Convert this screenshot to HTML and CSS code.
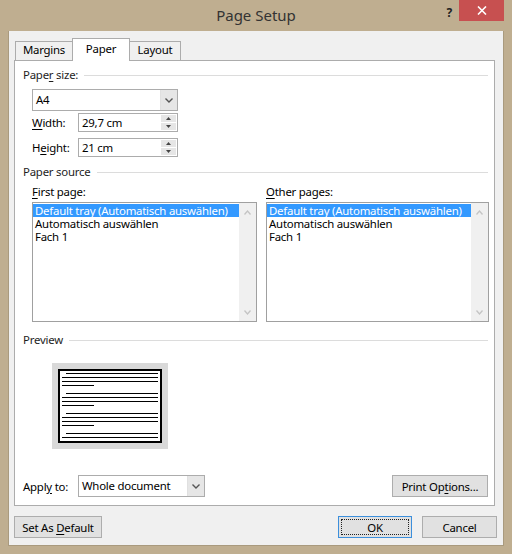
FILE: index.html
```html
<!DOCTYPE html>
<html>
<head>
<meta charset="utf-8">
<title>Page Setup</title>
<link rel="stylesheet" href="styles.css">
</head>
<body>
<div class="window">
  <div class="titlebar">
    <div></div>
    <div class="title">Page Setup</div>
    <div class="controls">
      <span class="help">?</span>
      <span class="close">
        <svg width="10" height="9" viewBox="0 0 10 9"><path d="M1 0.5 L9 8.5 M9 0.5 L1 8.5" stroke="#fff" stroke-width="1.6" fill="none"/></svg>
      </span>
    </div>
  </div>

  <div class="client">
    <div class="tabs">
      <div class="tab tab-margins">Margins</div>
      <div class="tab tab-paper active">Paper</div>
      <div class="tab tab-layout">Layout</div>
    </div>

    <div class="panel">
      <div class="group-head"><span>Pape<u>r</u> size:</span></div>
      <div class="indent size-block">
        <div class="combo size-combo">
          <span class="combo-text">A4</span>
          <span class="drop"><svg width="8" height="5" viewBox="0 0 8 5"><path d="M0.5 0.5 L4 4 L7.5 0.5" stroke="#555" stroke-width="1.4" fill="none"/></svg></span>
        </div>
        <div class="field-row">
          <span class="field-label"><u>W</u>idth:</span>
          <div class="spin">
            <span class="spin-text">29,7 cm</span>
            <span class="spin-btns">
              <i><svg width="5" height="3" viewBox="0 0 5 3"><path d="M0 3 L2.5 0 L5 3 Z" fill="#444"/></svg></i>
              <i><svg width="5" height="3" viewBox="0 0 5 3"><path d="M0 0 L2.5 3 L5 0 Z" fill="#444"/></svg></i>
            </span>
          </div>
        </div>
        <div class="field-row">
          <span class="field-label">H<u>e</u>ight:</span>
          <div class="spin">
            <span class="spin-text">21 cm</span>
            <span class="spin-btns">
              <i><svg width="5" height="3" viewBox="0 0 5 3"><path d="M0 3 L2.5 0 L5 3 Z" fill="#444"/></svg></i>
              <i><svg width="5" height="3" viewBox="0 0 5 3"><path d="M0 0 L2.5 3 L5 0 Z" fill="#444"/></svg></i>
            </span>
          </div>
        </div>
      </div>

      <div class="group-head source-head"><span>Paper source</span></div>
      <div class="indent lists">
        <div class="list-col">
          <div class="list-label"><u>F</u>irst page:</div>
          <div class="listbox">
            <div class="items">
              <div class="item selected">Default tray (Automatisch auswählen)</div>
              <div class="item">Automatisch auswählen</div>
              <div class="item">Fach 1</div>
            </div>
            <div class="vscroll">
              <svg width="7" height="5" viewBox="0 0 7 5"><path d="M0.5 4.5 L3.5 1 L6.5 4.5" stroke="#c4c4c4" stroke-width="1.3" fill="none"/></svg>
              <svg width="7" height="5" viewBox="0 0 7 5"><path d="M0.5 0.5 L3.5 4 L6.5 0.5" stroke="#c4c4c4" stroke-width="1.3" fill="none"/></svg>
            </div>
          </div>
        </div>
        <div class="list-col">
          <div class="list-label"><u>O</u>ther pages:</div>
          <div class="listbox">
            <div class="items">
              <div class="item selected">Default tray (Automatisch auswählen)</div>
              <div class="item">Automatisch auswählen</div>
              <div class="item">Fach 1</div>
            </div>
            <div class="vscroll">
              <svg width="7" height="5" viewBox="0 0 7 5"><path d="M0.5 4.5 L3.5 1 L6.5 4.5" stroke="#c4c4c4" stroke-width="1.3" fill="none"/></svg>
              <svg width="7" height="5" viewBox="0 0 7 5"><path d="M0.5 0.5 L3.5 4 L6.5 0.5" stroke="#c4c4c4" stroke-width="1.3" fill="none"/></svg>
            </div>
          </div>
        </div>
      </div>

      <div class="group-head preview-head"><span>Preview</span></div>
      <div class="preview">
        <svg width="116" height="86" viewBox="0 0 116 86">
          <rect x="0" y="0" width="116" height="86" fill="#d9d9d9"/>
          <rect x="7" y="7" width="102" height="72" fill="#fff" stroke="#000" stroke-width="2"/>
          <g stroke="#000" stroke-width="1">
            <path d="M14 10.5 H106 M10 14.5 H106 M10 18.5 H106 M10 22.5 H42"/>
            <path d="M14 30.5 H106 M10 34.5 H106 M10 38.5 H106 M10 42.5 H42"/>
            <path d="M14 50.5 H106 M10 54.5 H106 M10 58.5 H106 M10 62.5 H42"/>
            <path d="M14 70.5 H106 M10 74.5 H106"/>
          </g>
        </svg>
      </div>

      <div class="apply-row">
        <span class="apply-label">Appl<u>y</u> to:</span>
        <div class="combo apply-combo">
          <span class="combo-text">Whole document</span>
          <span class="drop"><svg width="8" height="5" viewBox="0 0 8 5"><path d="M0.5 0.5 L4 4 L7.5 0.5" stroke="#555" stroke-width="1.4" fill="none"/></svg></span>
        </div>
        <button class="btn print-btn">Print Op<u>t</u>ions...</button>
      </div>
    </div>

    <div class="buttons">
      <button class="btn default-btn">Set As <u>D</u>efault</button>
      <button class="btn ok-btn"><span class="focus">OK</span></button>
      <button class="btn cancel-btn">Cancel</button>
    </div>
  </div>
</div>
</body>
</html>
```

FILE: styles.css
```css
* {
  box-sizing: border-box;
}

body {
  margin: 0;
  width: 512px;
  height: 554px;
  overflow: hidden;
  background: #bfae90;
  font-family: "Segoe UI", "Noto Sans", sans-serif;
  font-size: 11.4px;
  letter-spacing: -0.22px;
  color: #000;
}

u {
  text-decoration: underline;
  text-underline-offset: 2px;
}

.window {
  display: flex;
  flex-direction: column;
  height: 554px;
}

/* ---- title bar ---- */
.titlebar {
  height: 31px;
  display: grid;
  grid-template-columns: 1fr auto 1fr;
  align-items: start;
}

.title {
  font-size: 15px;
  line-height: 30px;
  letter-spacing: 0;
  color: #333;
}

.controls {
  justify-self: end;
  display: flex;
  align-items: flex-start;
  margin-right: 8px;
}

.help {
  font-weight: bold;
  font-size: 12px;
  color: #222;
  margin-top: 4px;
  margin-right: 7px;
}

.close {
  width: 45px;
  height: 21px;
  background: #c75050;
  display: flex;
  align-items: center;
  justify-content: center;
}

/* ---- client area ---- */
.client {
  flex: 1;
  margin: 0 8px 8px;
  background: #f0f0f0;
  border: 1px solid #a99a7e;
  border-top: none;
  display: flex;
  flex-direction: column;
}

.tabs {
  display: flex;
  align-items: flex-end;
  height: 22px;
  margin: 7px 0 0 6px;
  position: relative;
  z-index: 1;
}

.tab {
  height: 19px;
  border: 1px solid #acacac;
  border-bottom: none;
  background: #f0f0f0;
  text-align: center;
  line-height: 16px;
  color: #000;
}

.tab-margins {
  width: 58px;
}

.tab-paper {
  width: 58px;
  margin-left: -1px;
}

.tab-layout {
  width: 52px;
  margin-left: -1px;
}

.tab.active {
  height: 23px;
  margin-bottom: -1px;
  background: #fff;
  position: relative;
  z-index: 2;
  line-height: 19px;
}

.panel {
  margin: 0 8px 0 5px;
  border: 1px solid #acacac;
  background: #fff;
  padding: 6px 6px 8px 8px;
  display: flex;
  flex-direction: column;
}

/* group headings with a rule running to the right */
.group-head {
  display: flex;
  align-items: center;
  gap: 6px;
  line-height: 16px;
  height: 16px;
  color: #1e1e1e;
}

.group-head::after {
  content: "";
  flex: 1;
  height: 1px;
  background: #dcdcdc;
}

.indent {
  margin-left: 9px;
}

.size-block {
  display: flex;
  flex-direction: column;
  margin-top: 6px;
}

/* ---- combo boxes ---- */
.combo {
  display: flex;
  height: 22px;
  border: 1px solid #acacac;
  background: #fff;
}

.combo-text {
  flex: 1;
  padding-left: 3px;
  line-height: 20px;
}

.drop {
  width: 17px;
  background: #e6e6e6;
  border-left: 1px solid #e0e0e0;
  display: flex;
  align-items: center;
  justify-content: center;
}

.size-combo {
  width: 146px;
}

/* ---- spinners ---- */
.field-row {
  display: flex;
  align-items: center;
  margin-top: 2px;
  height: 19px;
}

.field-row + .field-row {
  margin-top: 6px;
}

.field-label {
  width: 46px;
}

.spin {
  width: 100px;
  height: 19px;
  display: flex;
  border: 1px solid #acacac;
  background: #fff;
}

.spin-text {
  flex: 1;
  padding-left: 3px;
  line-height: 17px;
}

.spin-btns {
  width: 16px;
  display: flex;
  flex-direction: column;
  gap: 1px;
  padding: 1px 1px 1px 0;
}

.spin-btns i {
  flex: 1;
  background: #e6e6e6;
  display: flex;
  align-items: center;
  justify-content: center;
}

/* ---- paper source lists ---- */
.source-head {
  margin-top: 7px;
}

.lists {
  display: grid;
  grid-template-columns: 225px 223px;
  column-gap: 9px;
  margin-top: 4px;
}

.list-label {
  line-height: 16px;
  margin-bottom: 2px;
}

.listbox {
  height: 120px;
  border: 1px solid #a0a0a0;
  background: #fff;
  display: flex;
}

.items {
  flex: 1;
  min-width: 0;
}

.item {
  height: 13px;
  line-height: 13px;
  padding-left: 2px;
  white-space: nowrap;
}

.item.selected {
  background: #3399ff;
  color: #fff;
  margin-top: 1px;
}

.vscroll {
  width: 17px;
  background: #f0f0f0;
  display: flex;
  flex-direction: column;
  justify-content: space-between;
  align-items: center;
  padding: 7px 0 6px;
}

/* ---- preview ---- */
.preview-head {
  margin-top: 10px;
}

.preview {
  margin: 15px 0 0 29px;
  height: 86px;
  line-height: 0;
}

/* ---- apply row ---- */
.apply-row {
  display: flex;
  align-items: center;
  margin-top: 26px;
  height: 22px;
}

.apply-label {
  width: 55px;
}

.apply-combo {
  width: 127px;
}

.btn {
  font-family: inherit;
  font-size: inherit;
  letter-spacing: inherit;
  color: #000;
  height: 22px;
  border: 1px solid #adadad;
  background: #e1e1e1;
  padding: 0;
  margin: 0;
}

.print-btn {
  margin-left: auto;
  width: 96px;
}

/* ---- dialog buttons ---- */
.buttons {
  display: flex;
  align-items: center;
  margin: 10px 6px 0 5px;
}

.default-btn {
  width: 88px;
}

.ok-btn {
  margin-left: auto;
  width: 74px;
  border-color: #3c8fdc;
  padding: 2px;
}

.ok-btn .focus {
  display: flex;
  height: 100%;
  align-items: center;
  justify-content: center;
  border: 1px dotted #222;
}

.cancel-btn {
  margin-left: 10px;
  width: 75px;
}
```
